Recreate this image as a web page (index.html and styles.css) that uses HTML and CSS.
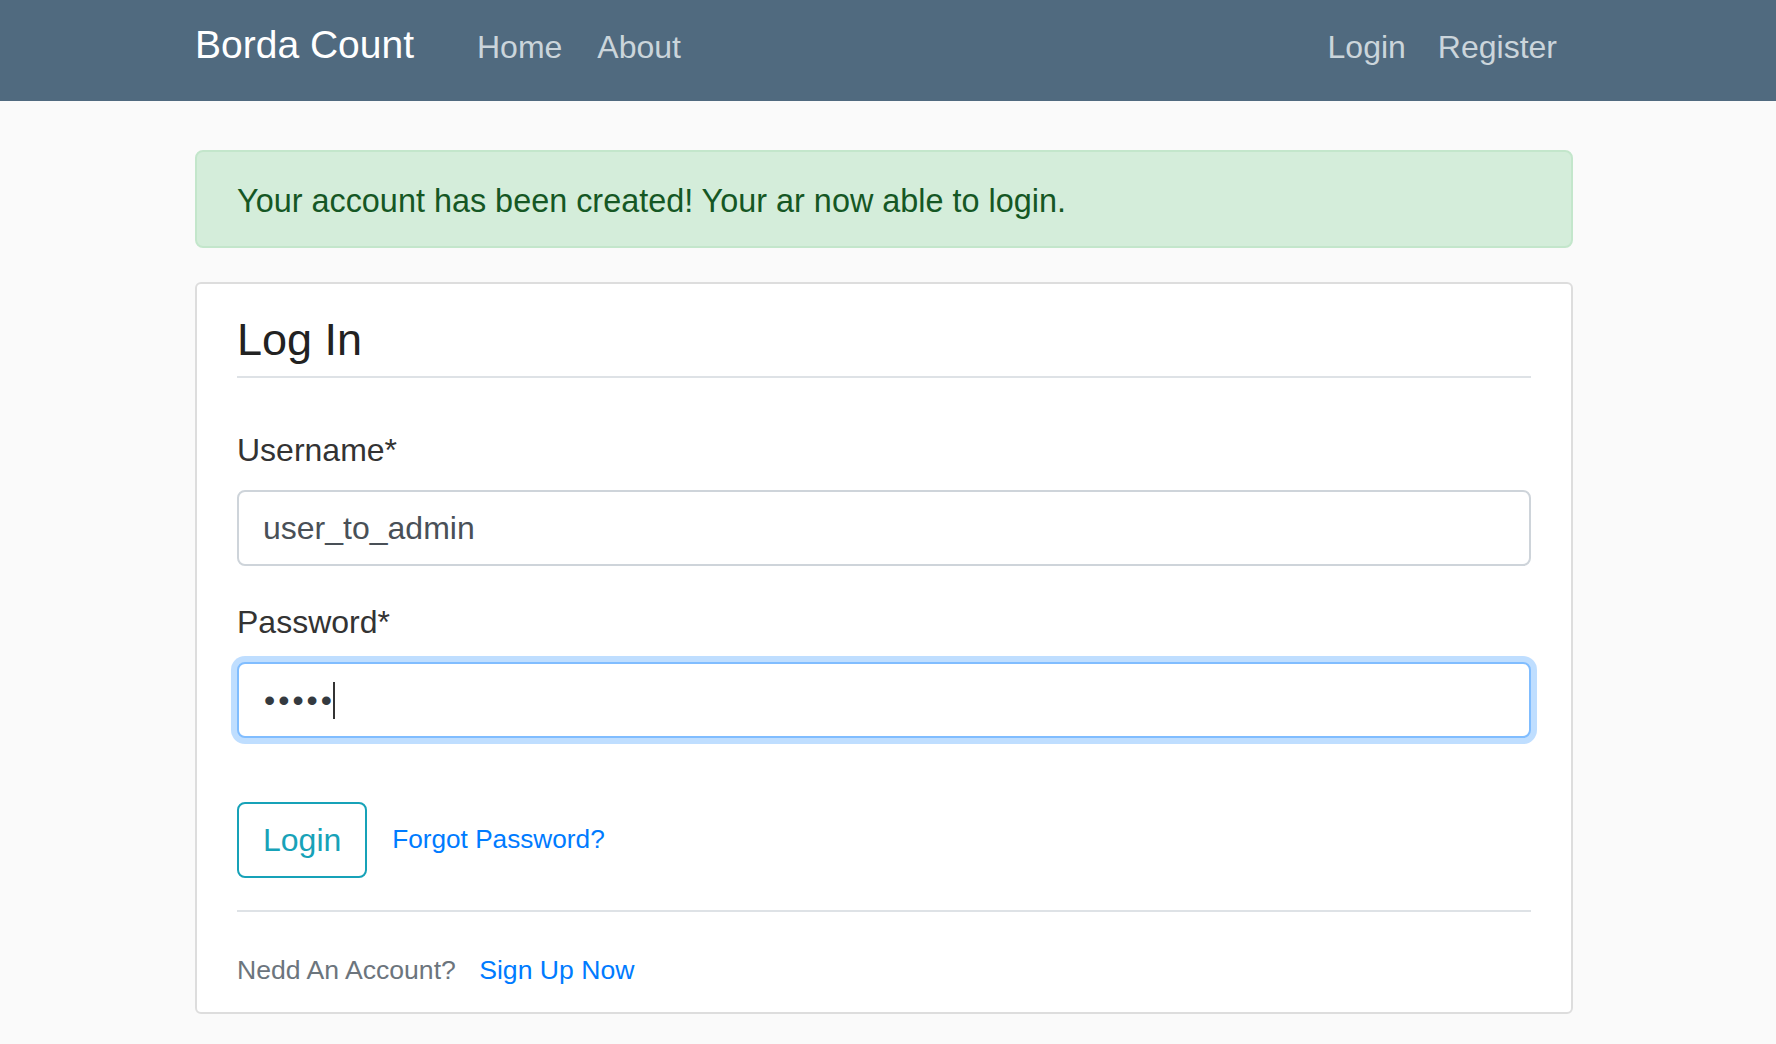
FILE: index.html
```html
<!DOCTYPE html>
<html lang="en">
<head>
<meta charset="utf-8">
<title>Borda Count - Login</title>
<link rel="stylesheet" href="styles.css">
</head>
<body>
<header class="site-header">
  <nav class="navbar">
    <a class="navbar-brand" href="#">Borda Count</a>
    <div class="nav-group">
      <a class="nav-link" href="#">Home</a>
      <a class="nav-link" href="#">About</a>
    </div>
    <div class="nav-group nav-right">
      <a class="nav-link" href="#">Login</a>
      <a class="nav-link" href="#">Register</a>
    </div>
  </nav>
</header>
<main class="container">
  <div class="alert alert-success">Your account has been created! Your ar now able to login.</div>
  <div class="content-section">
    <form class="login-form" action="#" method="post">
      <fieldset class="fieldset">
        <legend class="legend">Log In</legend>
        <div class="form-group">
          <label class="form-label" for="username">Username*</label>
          <input class="form-control" id="username" type="text" value="user_to_admin">
        </div>
        <div class="form-group">
          <label class="form-label" for="password">Password*</label>
          <div class="form-control is-focused" id="password"><span class="dots">•••••</span><span class="caret"></span></div>
        </div>
      </fieldset>
      <div class="form-group submit-group">
        <button class="btn btn-outline-info" type="button">Login</button>
        <small class="small-link"><a href="#">Forgot Password?</a></small>
      </div>
    </form>
    <div class="signup-row">
      <small class="text-muted">Nedd An Account? <a class="signup-link" href="#">Sign Up Now</a></small>
    </div>
  </div>
</main>
</body>
</html>
```
FILE: styles.css
```css
html, body {
  margin: 0;
  padding: 0;
}

body {
  background: #fafafa;
  color: #333333;
  font-family: "Liberation Sans", Arial, sans-serif;
  font-size: 32px;
  line-height: 48px;
}

a {
  text-decoration: none;
}

.site-header {
  background: #506a7f;
}

.navbar {
  box-sizing: border-box;
  height: 101px;
  padding: 15px 203px 0 195px;
  display: flex;
  align-items: baseline;
}

.navbar-brand {
  color: #ffffff;
  font-size: 39px;
  line-height: 60px;
  margin-right: 47px;
}

.nav-group {
  display: flex;
  align-items: baseline;
}

.nav-right {
  margin-left: auto;
}

.nav-link {
  color: #cbd5db;
  font-size: 32px;
  line-height: 48px;
  padding: 0 16px;
}

.nav-group:not(.nav-right) .nav-link + .nav-link {
  margin-left: 3px;
}

.container {
  padding: 49px 203px 40px 195px;
}

.alert {
  border: 2px solid #c3e6cb;
  border-radius: 8px;
  padding: 25px 40px 21px;
  margin-bottom: 34px;
  font-size: 32.4px;
}

.alert-success {
  background: #d4edda;
  color: #155724;
}

.content-section {
  background: #ffffff;
  border: 2px solid #dddddd;
  border-radius: 6px;
  padding: 20px 40px 18px;
}

.fieldset {
  border: 0;
  margin: 0;
  padding: 0;
  min-width: 0;
}

.legend {
  display: block;
  width: 100%;
  padding: 0;
  font-size: 45px;
  line-height: 72px;
  color: #222222;
  border-bottom: 2px solid #dee2e6;
  margin-bottom: 48px;
}

.form-group {
  margin-bottom: 32px;
}

.form-label {
  display: block;
  margin-bottom: 16px;
  color: #333333;
}

.form-control {
  display: block;
  box-sizing: border-box;
  width: 100%;
  height: 76px;
  margin: 0;
  padding: 12px 24px;
  font-family: "Liberation Sans", Arial, sans-serif;
  font-size: 32px;
  line-height: 48px;
  color: #495057;
  background: #ffffff;
  border: 2px solid #ced4da;
  border-radius: 8px;
  outline: none;
}

.is-focused {
  border-color: #80bdff;
  box-shadow: 0 0 0 6px rgba(0, 123, 255, 0.25);
  display: flex;
  align-items: center;
}

.dots {
  color: #343a40;
  letter-spacing: 3px;
  font-size: 32px;
  margin-left: 1px;
}

.caret {
  display: inline-block;
  width: 2px;
  height: 37px;
  background: #333333;
  margin-left: -2px;
}

.submit-group {
  margin-top: 32px;
}

.btn {
  display: inline-block;
  font-family: "Liberation Sans", Arial, sans-serif;
  font-size: 32px;
  line-height: 48px;
  padding: 12px 24px;
  border-radius: 8px;
  vertical-align: middle;
  cursor: pointer;
}

.btn-outline-info {
  color: #17a2b8;
  background: transparent;
  border: 2px solid #17a2b8;
}

.small-link {
  font-size: 26.2px;
  margin-left: 16px;
}

.small-link a {
  color: #007bff;
}

.signup-row {
  border-top: 2px solid #dee2e6;
  padding-top: 32px;
}

.text-muted {
  font-size: 26.6px;
  color: #6c757d;
}

.signup-link {
  color: #007bff;
  margin-left: 16px;
}
```
